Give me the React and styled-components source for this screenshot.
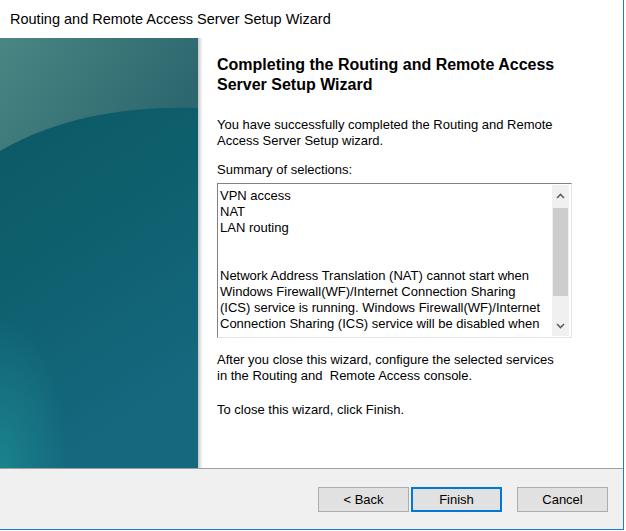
import React from 'react'
import styled, { createGlobalStyle } from 'styled-components'

const GlobalStyle = createGlobalStyle`
  html, body {
    margin: 0;
    padding: 0;
    background: #ffffff;
  }
  body {
    font-family: "Liberation Sans", Arial, sans-serif;
    color: #000;
  }
`

const Window = styled.div`
  width: 623px;
  height: 529px;
  border-right: 1px solid #1a7bd0;
  border-bottom: 1px solid #1a7bd0;
  display: flex;
  flex-direction: column;
  background: #fff;
`

const TitleBar = styled.div`
  height: 38px;
  display: flex;
  align-items: center;
  padding-left: 10px;
  font-size: 14.5px;
  color: #000;
`

const Body = styled.div`
  height: 430px;
  display: flex;
  border-bottom: 1px solid #a0a0a0;
`

const SidePanel = styled.div`
  width: 198px;
  flex-shrink: 0;
  overflow: hidden;
  svg {
    display: block;
  }
`

const Shadow = styled.div`
  width: 5px;
  flex-shrink: 0;
  background: linear-gradient(to right, #c9c9c9, #ececec 60%, #ffffff);
`

const Content = styled.div`
  flex: 1;
  padding: 17px 0 0 14px;
  font-size: 13px;
`

const Heading = styled.h1`
  margin: 0;
  font-size: 16px;
  line-height: 20px;
  font-weight: bold;
`

const Para = styled.p`
  margin: ${p => p.$top || 0}px 0 0;
  line-height: 16px;
`

const ListBox = styled.div`
  margin-top: 5px;
  width: 353px;
  height: 153px;
  border-top: 1px solid #828282;
  border-left: 1px solid #828282;
  border-right: 1px solid #e3e3e3;
  border-bottom: 1px solid #e3e3e3;
  display: flex;
  background: #fff;
`

const ListText = styled.div`
  flex: 1;
  padding: 4px 0 0 2px;
  overflow: hidden;
  line-height: 16px;
  white-space: nowrap;
`

const ScrollBar = styled.div`
  width: 17px;
  margin: 1px 2px 1px 0;
  background: #f0f0f0;
  display: flex;
  flex-direction: column;
  align-items: center;
`

const Arrow = styled.div`
  height: 21px;
  width: 17px;
  display: flex;
  align-items: center;
  justify-content: center;
`

const Track = styled.div`
  flex: 1;
  width: 17px;
  display: flex;
  flex-direction: column;
`

const Thumb = styled.div`
  margin-top: 2px;
  height: 88px;
  margin-left: 1px;
  width: 15px;
  background: #cdcdcd;
`

const Footer = styled.div`
  flex: 1;
  background: #f0f0f0;
  display: flex;
  justify-content: flex-end;
  align-items: flex-start;
  padding: 18px 15px 0 0;
`

const Button = styled.button`
  width: 91px;
  height: 25px;
  margin-left: ${p => p.$gap || 0}px;
  font-family: "Liberation Sans", Arial, sans-serif;
  font-size: 13px;
  color: #000;
  background: #e1e1e1;
  border: ${p => (p.$default ? '2px solid #0078d7' : '1px solid #adadad')};
  padding: 0;
  box-sizing: border-box;
`

const Chevron = ({ up }) => (
  <svg width="9" height="6" viewBox="0 0 9 6">
    <path
      d={up ? 'M1 5 L4.5 1.5 L8 5' : 'M1 1 L4.5 4.5 L8 1'}
      fill="none"
      stroke="#606060"
      strokeWidth="1.6"
    />
  </svg>
)

const PanelArt = () => (
  <svg width="198" height="430" viewBox="0 0 198 430">
    <defs>
      <linearGradient id="base" x1="0" y1="0" x2="0.3" y2="1">
        <stop offset="0" stopColor="#0b5661" />
        <stop offset="0.5" stopColor="#0e5f6d" />
        <stop offset="1" stopColor="#15687e" />
      </linearGradient>
      <linearGradient id="top" x1="0" y1="0" x2="1" y2="0.4">
        <stop offset="0" stopColor="#4a8683" />
        <stop offset="1" stopColor="#2c676f" />
      </linearGradient>
      <radialGradient id="glow" cx="0" cy="1" r="0.35">
        <stop offset="0" stopColor="#1c8a8f" stopOpacity="0.8" />
        <stop offset="1" stopColor="#1c8a8f" stopOpacity="0" />
      </radialGradient>
    </defs>
    <rect width="198" height="430" fill="url(#base)" />
    <rect width="198" height="430" fill="url(#glow)" />
    <path d="M0 0 H198 V70 C130 68 60 78 0 113 Z" fill="url(#top)" />
  </svg>
)

const App = () => {
  return (
    <>
      <GlobalStyle />
      <Window>
        <TitleBar>Routing and Remote Access Server Setup Wizard</TitleBar>
        <Body>
          <SidePanel>
            <PanelArt />
          </SidePanel>
          <Shadow />
          <Content>
            <Heading>
              Completing the Routing and Remote Access
              <br />
              Server Setup Wizard
            </Heading>
            <Para $top={22}>
              You have successfully completed the Routing and Remote
              <br />
              Access Server Setup wizard.
            </Para>
            <Para $top={13}>Summary of selections:</Para>
            <ListBox>
              <ListText>
                <div>VPN access</div>
                <div>NAT</div>
                <div>LAN routing</div>
                <div>&nbsp;</div>
                <div>&nbsp;</div>
                <div>Network Address Translation (NAT) cannot start when</div>
                <div>Windows Firewall(WF)/Internet Connection Sharing</div>
                <div>(ICS) service is running. Windows Firewall(WF)/Internet</div>
                <div>Connection Sharing (ICS) service will be disabled when</div>
              </ListText>
              <ScrollBar>
                <Arrow><Chevron up /></Arrow>
                <Track>
                  <Thumb />
                </Track>
                <Arrow><Chevron /></Arrow>
              </ScrollBar>
            </ListBox>
            <Para $top={14}>
              After you close this wizard, configure the selected services
              <br />
              in the Routing and&nbsp; Remote Access console.
            </Para>
            <Para $top={18}>To close this wizard, click Finish.</Para>
          </Content>
        </Body>
        <Footer>
          <Button>&lt; Back</Button>
          <Button $default $gap={2}>Finish</Button>
          <Button $gap={15}>Cancel</Button>
        </Footer>
      </Window>
    </>
  )
}

export default App
